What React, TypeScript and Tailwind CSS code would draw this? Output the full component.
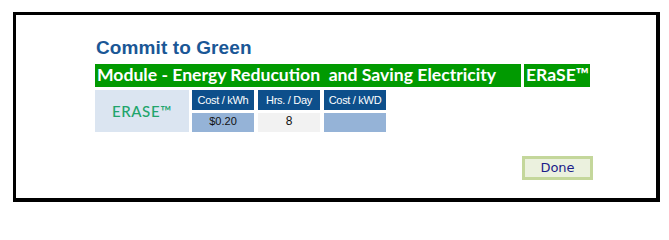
import React from "react";

export default function App() {
  return (
    <div className="w-[669px] h-[216px] bg-white pt-[12px] pl-[13px]">
      <div className="w-[647px] h-[190px] border-black border-l-[3px] border-t-[3px] border-r-[4px] border-b-[4px] pl-[79px] pt-[22px]">
        <div
          className="text-[19px] leading-[22px] font-bold text-[#1a5796] ml-[1px] tracking-[0.1px]"
          style={{ fontFamily: "Arial, 'Liberation Sans', sans-serif" }}
        >
          Commit to Green
        </div>
        <div
          className="mt-[5px] flex gap-[3px] h-[23px] text-white font-bold text-[17.6px] leading-[21px]"
          style={{ fontFamily: "Lato, 'Open Sans', sans-serif" }}
        >
          <div className="w-[426px] h-[23px] bg-[#019a01] pl-[2px] whitespace-pre">
            {"Module - Energy Reducution  and Saving Electricity"}
          </div>
          <div className="w-[66px] h-[23px] bg-[#019a01] pl-[2px]">ERaSE™</div>
        </div>
        <div className="mt-[3px] flex gap-[3px]">
          <div
            className="w-[94px] h-[42px] bg-[#dbe5f1] flex items-center justify-center text-[15px] tracking-[0.6px] font-medium text-[#20a46b]"
            style={{ fontFamily: "Lato, 'Open Sans', sans-serif" }}
          >
            ERASE™
          </div>
          <div
            className="flex gap-[4px] text-[11px]"
            style={{ fontFamily: "Arial, 'Liberation Sans', sans-serif" }}
          >
            <div className="w-[62px] flex flex-col gap-[3px]">
              <div className="h-[20px] leading-[20px] bg-[#0d4f8b] text-white text-center tracking-[-0.3px]">
                Cost / kWh
              </div>
              <div className="h-[19px] leading-[17px] bg-[#95b3d7] text-[#111] text-center">
                $0.20
              </div>
            </div>
            <div className="w-[62px] flex flex-col gap-[3px]">
              <div className="h-[20px] leading-[20px] bg-[#0d4f8b] text-white text-center tracking-[-0.3px]">
                Hrs. / Day
              </div>
              <div className="h-[19px] leading-[17px] bg-[#f2f2f2] text-[#111] text-center text-[12px]">
                8
              </div>
            </div>
            <div className="w-[62px] flex flex-col gap-[3px]">
              <div className="h-[20px] leading-[20px] bg-[#0d4f8b] text-white text-center tracking-[-0.3px]">
                Cost / kWD
              </div>
              <div className="h-[19px] bg-[#95b3d7]"></div>
            </div>
          </div>
        </div>
        <div className="mt-[22px] ml-[427px]">
          <button
            className="w-[71px] h-[24px] border-[3px] border-[#c4d79b] bg-[#ebf1de] text-[13px] leading-[18px] text-[#1c1c8a] text-center"
            style={{ fontFamily: "'DejaVu Sans', Verdana, sans-serif" }}
          >
            Done
          </button>
        </div>
      </div>
    </div>
  );
}
